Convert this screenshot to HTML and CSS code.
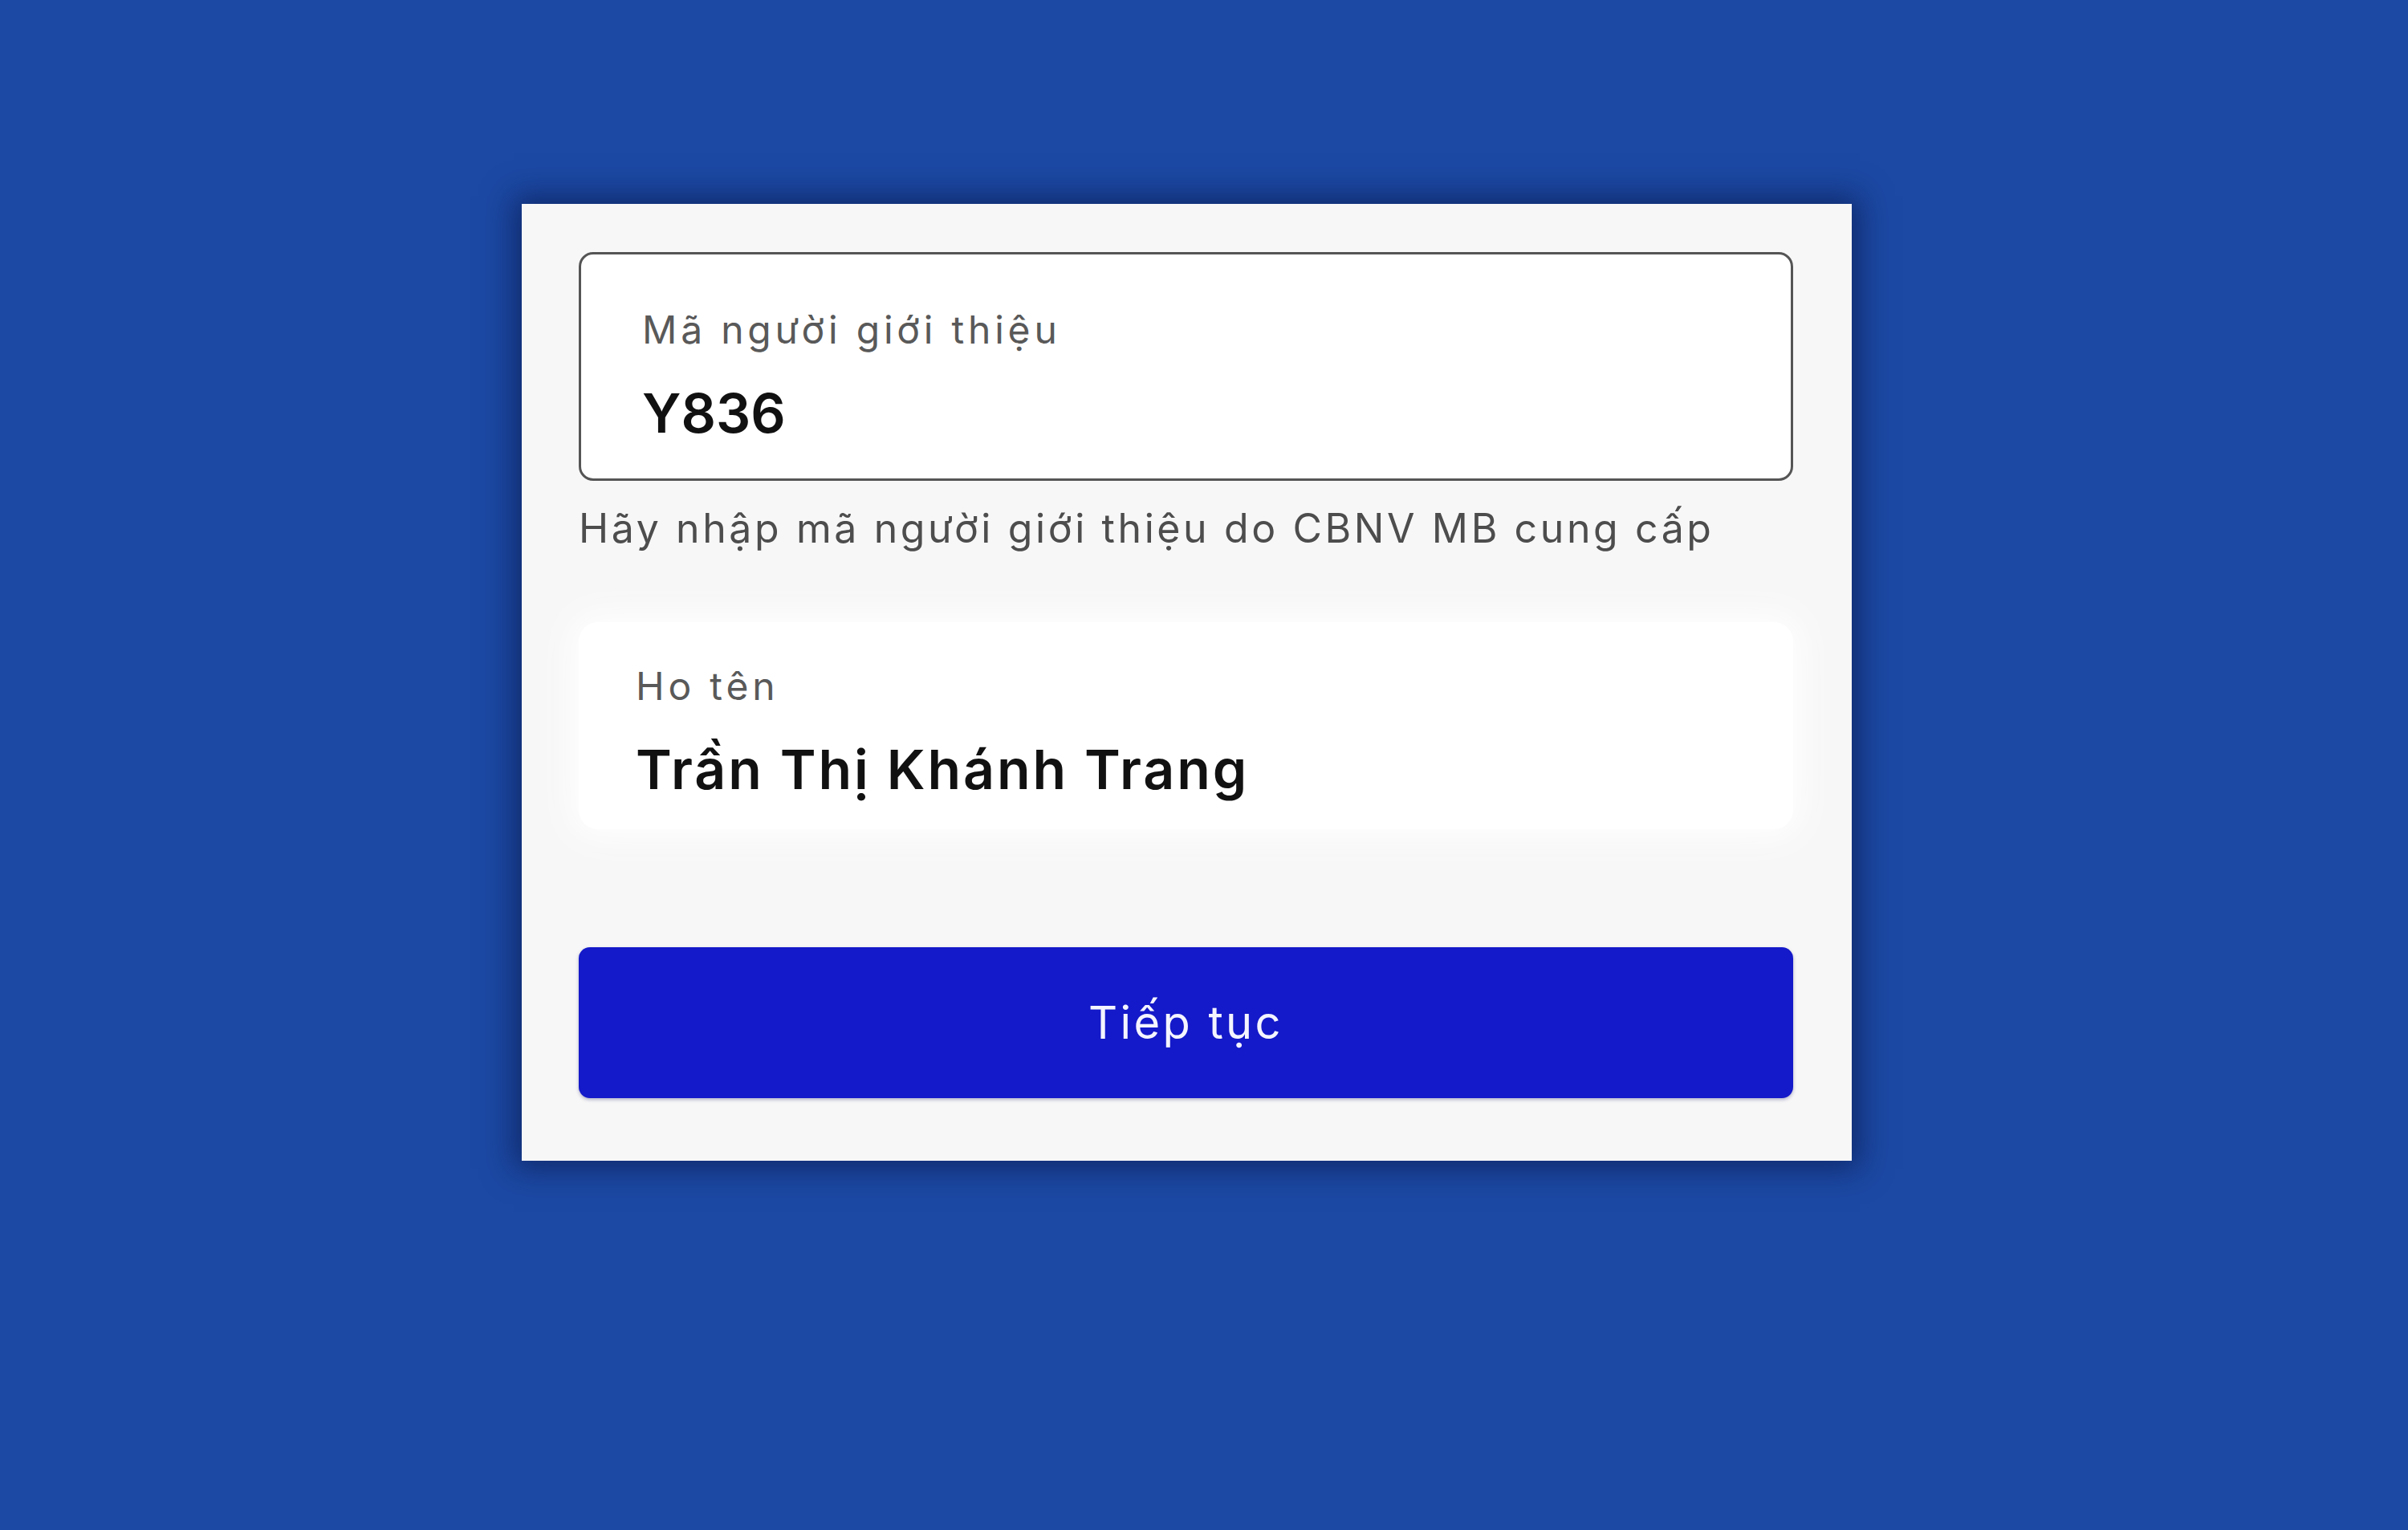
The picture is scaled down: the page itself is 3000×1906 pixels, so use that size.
FILE: index.html
```html
<!DOCTYPE html>
<html lang="vi">
    <head>
    <meta charset="utf-8">
    <meta name="viewport" content="width=device-width, initial-scale=1, shrink-to-fit=no">
        <link rel="stylesheet" href="styles.css">
    </head>

    <body>
        <!--referral form starts-->
        <div class="page">
            <form class="card">
                <div class="field field-outlined">
                    <label class="field-label" for="ref">Mã người giới thiệu</label>
                    <input type="text" id="ref" class="field-value" name="ref" value="Y836">
                </div>
                <p class="hint">Hãy nhập mã người giới thiệu do CBNV MB cung cấp</p>

                <div class="field field-filled">
                    <label class="field-label" for="fullname">Ho tên</label>
                    <input type="text" id="fullname" class="field-value" name="fullname" value="Trần Thị Khánh Trang" readonly>
                </div>

                <button type="button" class="nextbtn">Tiếp tục</button>
            </form>
        </div>
        <!--referral form ends-->
    </body>
</html>
```

FILE: styles.css
```css
/* referral form */
* {box-sizing: border-box}

body {
  margin: 0;
  background: #1c49a4;
  font-family: Inter, "Noto Sans", sans-serif;
}

.page {
  padding: 254px 0 0 650px;
  min-height: 1906px;
}

/* white sheet with the dark halo round it */
.card {
  width: 1657px;
  padding: 60px 73px 78px 71px;
  background: #f7f7f8;
  box-shadow: 0 0 36px 10px rgba(8, 22, 70, 0.6);
  display: flex;
  flex-direction: column;
}

.field {
  display: flex;
  flex-direction: column;
  background: #fff;
}

.field-outlined {
  height: 285px;
  padding: 64px 40px 0 76px;
  border: 3px solid #555;
  border-radius: 18px;
}

.field-filled {
  height: 258px;
  margin-top: 86px;
  padding: 50px 40px 0 71px;
  border-radius: 24px;
  box-shadow: 0 0 40px 16px rgba(255, 255, 255, 0.9), 0 0 60px 10px rgba(0, 0, 0, 0.02);
}

.field-label {
  font-size: 48px;
  line-height: 60px;
  letter-spacing: 4.8px;
  color: #595959;
}

.field-value {
  margin-top: 30px;
  padding: 0;
  border: none;
  outline: none;
  background: transparent;
  font-family: inherit;
  font-size: 68px;
  line-height: 86px;
  font-weight: 600;
  letter-spacing: 0;
  color: #111;
}

.field-filled .field-value {
  letter-spacing: 2.9px;
}

.hint {
  margin: 28px 0 0 0;
  font-size: 50px;
  line-height: 62px;
  letter-spacing: 3.6px;
  color: #4d4d4d;
}

.nextbtn {
  margin-top: 147px;
  height: 188px;
  width: 100%;
  border: none;
  border-radius: 14px;
  background-color: #1419c9;
  color: #f4f5ff;
  font-family: inherit;
  font-size: 56px;
  letter-spacing: 3.4px;
  cursor: pointer;
  box-shadow: 0 2px 4px rgba(10, 14, 90, 0.3);
}
```
